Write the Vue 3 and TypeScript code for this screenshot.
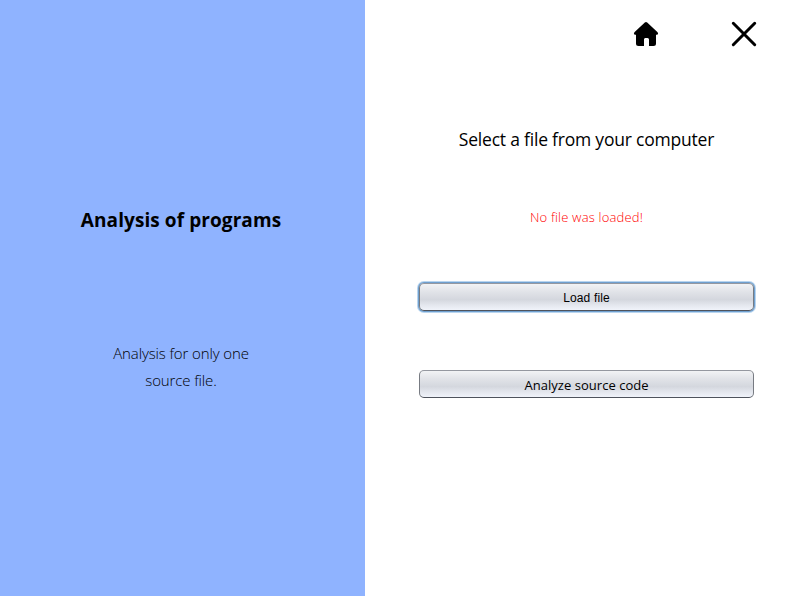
<script setup lang="ts">
import { ref } from 'vue'

const status = ref<string>('No file was loaded!')
</script>

<template>
  <div class="window">
    <aside class="side">
      <h1 class="title">Analysis of programs</h1>
      <p class="description"><span class="line first">Analysis for only one</span><span class="line second">source file.</span></p>
    </aside>
    <main class="content">
      <nav class="toolbar">
        <button class="icon" type="button" aria-label="Home">
          <svg width="26" height="26" viewBox="0 0 26 26">
            <path d="M11.8 1.5Q13 .5 14.2 1.5L24.6 11.2Q25.8 12.8 24.3 13.7H23V22.5Q23 25 20.5 25H16V18.5Q16 17 14.5 17H12.2Q11 17 11 18.5V25H5.5Q3 25 3 22.5V13.7H1.7Q.2 12.8 1.4 11.2Z" />
          </svg>
        </button>
        <button class="icon" type="button" aria-label="Close">
          <svg width="26" height="26" viewBox="0 0 26 26">
            <path d="M2.3 2.3L23.7 23.7M23.7 2.3L2.3 23.7" fill="none" stroke="#000" stroke-width="3" stroke-linecap="round" />
          </svg>
        </button>
      </nav>
      <h2 class="heading">Select a file from your computer</h2>
      <p class="status">{{ status }}</p>
      <button class="action load" type="button"><span>Load file</span></button>
      <button class="action analyze" type="button"><span>Analyze source code</span></button>
    </main>
  </div>
</template>

<style>
body {
  margin: 0;
  background: #fff;
}
</style>

<style scoped>
.window {
  display: flex;
  width: 795px;
  height: 596px;
  overflow: hidden;
  background: #fff;
  color: #000;
  font-family: "Open Sans", "Noto Sans", sans-serif;
}
.side {
  box-sizing: border-box;
  width: 365px;
  padding: 205px 3px 0 0;
  background: #8fb3ff;
  text-align: center;
}
h1, h2, p {
  margin: 0;
  white-space: nowrap;
}
.title {
  font-size: 19px;
  line-height: 30px;
  font-weight: 700;
  letter-spacing: 0.08px;
}
.description {
  margin-top: 105px;
  font-size: 15px;
  line-height: 27px;
  font-weight: 300;
  letter-spacing: -0.12px;
}
.line {
  display: block;
}
.content {
  display: flex;
  flex-direction: column;
  box-sizing: border-box;
  width: 430px;
  padding: 21px 40px 0 53px;
}
.toolbar {
  display: flex;
  justify-content: flex-end;
  gap: 72px;
  height: 26px;
  margin-right: -2px;
}
.icon {
  width: 26px;
  height: 26px;
  padding: 0;
  border: 0;
  background: none;
}
.icon svg {
  display: block;
}
.heading {
  margin-top: 77px;
  font-size: 17.5px;
  line-height: 30px;
  font-weight: 400;
  letter-spacing: -0.21px;
  text-align: center;
}
.status {
  margin-top: 53px;
  color: #f00;
  font-size: 13px;
  line-height: 20px;
  font-weight: 300;
  letter-spacing: 0.18px;
  text-align: center;
}
.action {
  box-sizing: border-box;
  width: 335px;
  height: 28px;
  margin-left: 1px;
  padding: 0;
  border: 1px solid #777b82;
  border-top-color: #9598a0;
  border-bottom-color: #4e535c;
  border-radius: 5px;
  background: linear-gradient(#f2f3f5 0%, #e1e3e8 30%, #d4d7de 60%, #e3e6ed 80%, #f0f3fa 100%);
  color: #000;
  text-align: center;
  white-space: nowrap;
}
.load {
  margin-top: 56px;
  box-shadow: 0 0 0 1px #6f9fce, 0 0 0 2px #b9d5ef;
  font: 12px/28px "Liberation Sans", sans-serif;
  letter-spacing: 0.15px;
}
.analyze {
  margin-top: 59px;
  font: 13px/28px "Open Sans", "Noto Sans", sans-serif;
  letter-spacing: 0.04px;
}
</style>
